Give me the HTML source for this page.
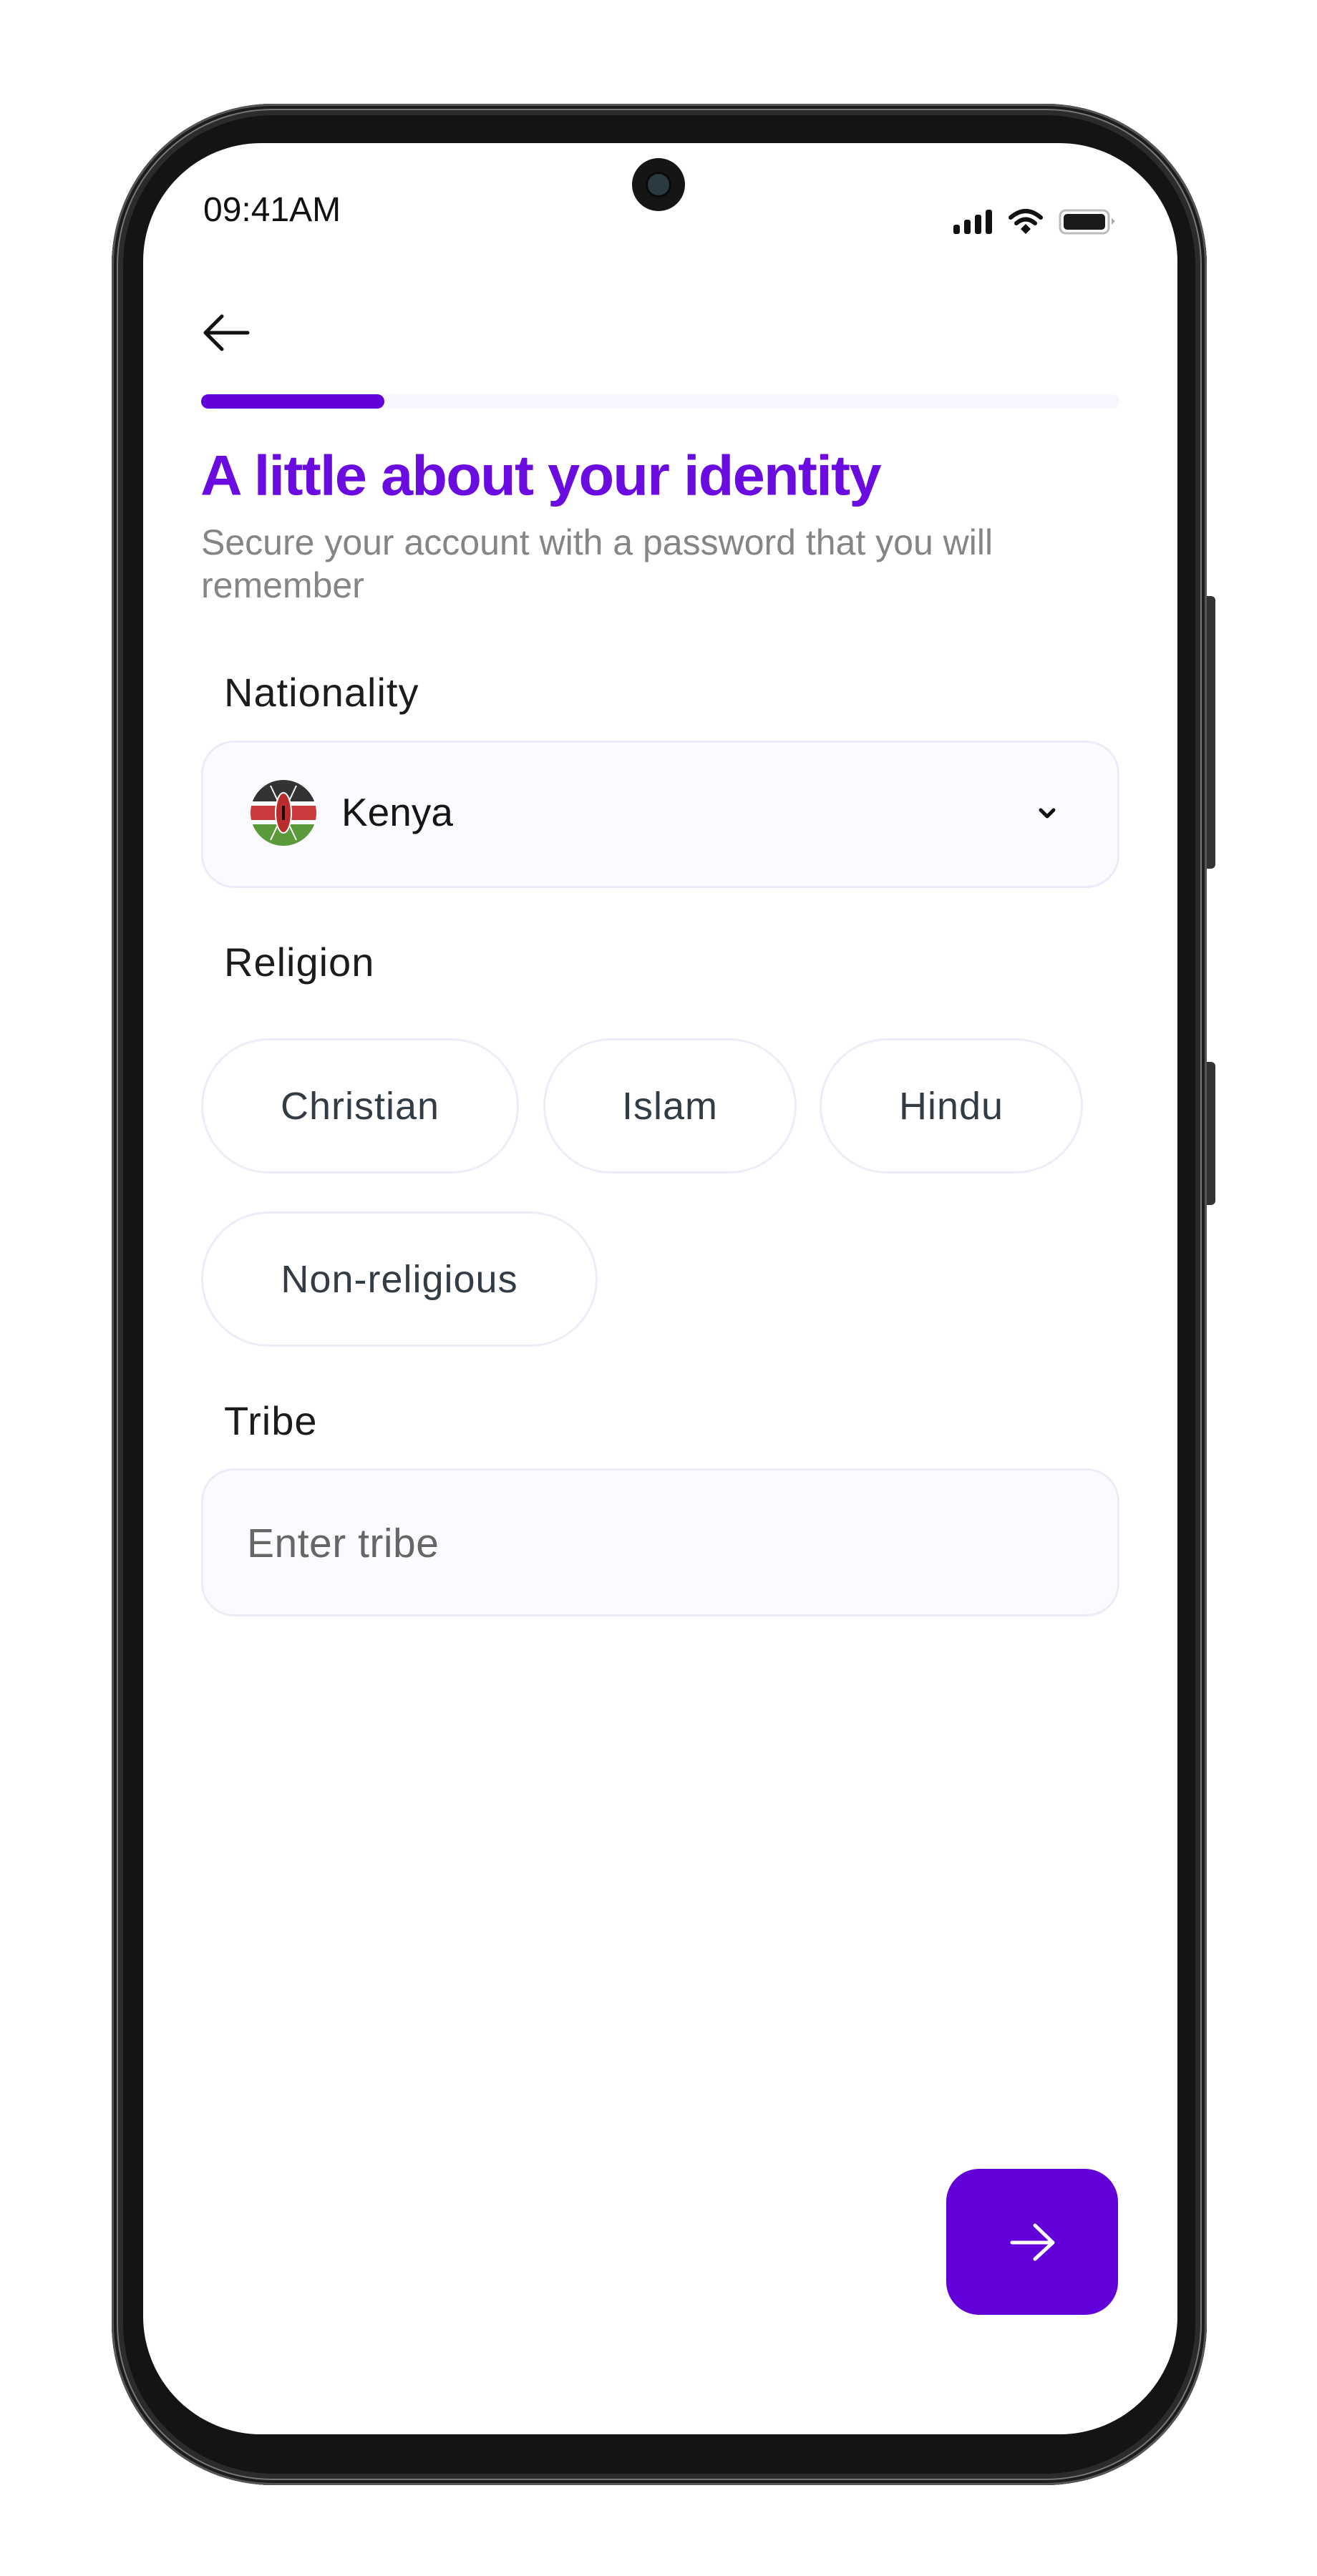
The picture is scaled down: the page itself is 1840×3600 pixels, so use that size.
<!DOCTYPE html>
<html><head><meta charset="utf-8"><style>
*{margin:0;padding:0;box-sizing:border-box}
body{width:1840px;height:3600px;background:#fff;position:relative;overflow:hidden;font-family:"Liberation Sans",sans-serif}
.abs{position:absolute}
.outer{left:156px;top:145px;width:1530px;height:3328px;border-radius:225px;background:#2b2b2b;box-shadow:inset 0 0 0 3px #555,inset 0 0 0 7px #1c1c1c,inset 0 0 0 9px #777}
.bezel{left:172px;top:161px;width:1498px;height:3296px;border-radius:210px;background:#141414}
.screen{left:200px;top:200px;width:1445px;height:3202px;border-radius:165px;background:#fff;overflow:hidden}
.side{background:#333;border-radius:0 6px 6px 0;width:12px}
.lbl{font-size:56px;color:#1c1c1c;letter-spacing:1px}
.box{left:281px;width:1283px;border:3px solid #ebebf9;background:#fbfbff;border-radius:46px}
.chip{position:absolute;height:189px;border:3px solid #ededf9;border-radius:95px;background:#fff;color:#333b45;font-size:54px;letter-spacing:1px;display:flex;align-items:center;justify-content:center}
</style></head><body>
<div class="abs side" style="left:1686px;top:833px;height:381px"></div>
<div class="abs side" style="left:1686px;top:1484px;height:200px"></div>
<div class="abs outer"></div>
<div class="abs bezel"></div>
<div class="abs screen"></div>

<div class="abs" style="left:883px;top:221px;width:74px;height:74px;border-radius:50%;background:#151515"><div style="margin:22px;width:30px;height:30px;border-radius:50%;background:#2a3a40;box-shadow:0 0 0 3px #0a0a0a"></div></div>

<div class="abs" style="left:284px;top:266px;font-size:48px;color:#111;letter-spacing:0px">09:41AM</div>
<svg class="abs" style="left:1330px;top:290px" width="232" height="40" viewBox="0 0 232 40">
<g fill="#111"><rect x="2" y="24" width="9" height="13" rx="3"/><rect x="17" y="17" width="9" height="20" rx="3"/><rect x="32" y="10" width="9" height="27" rx="3"/><rect x="47" y="3" width="9" height="34" rx="3"/></g>
<g fill="none" stroke="#111" stroke-width="6" stroke-linecap="round"><path d="M82 14 Q103 -4 124 14"/><path d="M90 22 Q103 11 116 22"/></g>
<path d="M96 30 L103 23 L110 30 L103 37 Z" fill="#111"/>
<rect x="151" y="4" width="68" height="32" rx="8" fill="none" stroke="#bbb" stroke-width="3"/>
<rect x="156" y="9" width="58" height="22" rx="5" fill="#1a1a1a"/>
<path d="M223 15 L228 19 L223 24Z" fill="#aaa"/>
</svg>

<svg class="abs" style="left:282px;top:437px" width="68" height="56" viewBox="0 0 68 56"><path d="M64 28 H6 M28 5 L5 28 L28 51" fill="none" stroke="#111" stroke-width="5" stroke-linecap="round" stroke-linejoin="round"/></svg>

<div class="abs" style="left:281px;top:551px;width:1283px;height:20px;border-radius:10px;background:#f7f5fd"></div>
<div class="abs" style="left:281px;top:551px;width:256px;height:20px;border-radius:10px;background:#6200d9"></div>

<div class="abs" style="left:280px;top:620px;font-size:70px;font-weight:bold;color:#6a0be0;letter-spacing:-1.5px;transform:scale(1.16,1.12);transform-origin:left top;white-space:nowrap">A little about your identity</div>
<div class="abs" style="left:281px;top:728px;width:1250px;font-size:50px;line-height:60px;color:#858585">Secure your account with a password that you will<br>remember</div>

<div class="abs lbl" style="left:313px;top:935px">Nationality</div>
<div class="abs box" style="top:1035px;height:206px"></div>
<svg class="abs" style="left:350px;top:1090px" width="92" height="92" viewBox="0 0 92 92">
<defs><clipPath id="c"><circle cx="46" cy="46" r="46"/></clipPath></defs>
<g clip-path="url(#c)"><rect width="92" height="30" fill="#333"/><rect y="30" width="92" height="6" fill="#fff"/><rect y="36" width="92" height="20" fill="#cc3b3b"/><rect y="56" width="92" height="6" fill="#fff"/><rect y="62" width="92" height="30" fill="#5a9a3a"/>
<path d="M28 8 L64 84 M64 8 L28 84" stroke="#fff" stroke-width="2"/>
<ellipse cx="46" cy="46" rx="11" ry="28" fill="#bb2b2b" stroke="#fff" stroke-width="2"/><rect x="44" y="36" width="4" height="20" fill="#111"/></g></svg>
<div class="abs" style="left:477px;top:1103px;font-size:55px;color:#151515">Kenya</div>
<svg class="abs" style="left:1449px;top:1126px" width="28" height="22" viewBox="0 0 28 22"><path d="M5 6 L14 15 L23 6" fill="none" stroke="#111" stroke-width="5" stroke-linecap="round" stroke-linejoin="round"/></svg>

<div class="abs lbl" style="left:313px;top:1312px">Religion</div>
<div class="chip" style="left:281px;top:1451px;width:444px">Christian</div>
<div class="chip" style="left:759px;top:1451px;width:354px">Islam</div>
<div class="chip" style="left:1145px;top:1451px;width:368px">Hindu</div>
<div class="chip" style="left:281px;top:1693px;width:554px">Non-religious</div>

<div class="abs lbl" style="left:313px;top:1953px">Tribe</div>
<div class="abs box" style="top:2052px;height:207px"></div>
<div class="abs" style="left:345px;top:2124px;font-size:57px;color:#666;letter-spacing:0.5px">Enter tribe</div>

<div class="abs" style="left:1322px;top:3031px;width:240px;height:204px;border-radius:46px;background:#6200d9"></div>
<svg class="abs" style="left:1405px;top:3105px" width="74" height="58" viewBox="0 0 74 58"><path d="M9 29 H66 M41 5 L66 29 L41 52" fill="none" stroke="#fff" stroke-width="5" stroke-linecap="round" stroke-linejoin="round"/></svg>
</body></html>
